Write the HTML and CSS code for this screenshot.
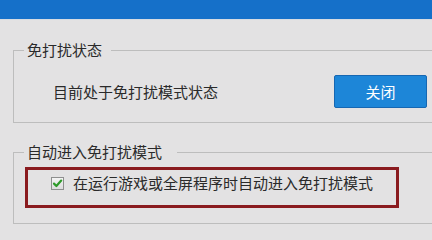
FILE: index.html
```html
<!DOCTYPE html>
<html lang="zh-CN">
<head>
<meta charset="utf-8">
<link rel="stylesheet" href="styles.css">
</head>
<body>
<div class="titlebar"></div>
<main class="content">
  <fieldset class="group group-status">
    <legend class="group-title">免打扰状态</legend>
    <div class="status-row">
      <span class="status-text">目前处于免打扰模式状态</span>
      <button class="btn-primary" type="button">关闭</button>
    </div>
  </fieldset>
  <fieldset class="group group-auto">
    <legend class="group-title">自动进入免打扰模式</legend>
    <div class="highlight">
      <label class="check-row">
        <span class="checkbox">
          <svg width="11" height="11" viewBox="0 0 11 11"><path d="M2 5.6 L4.4 8 L9.2 2.6" fill="none" stroke="#2e9a2a" stroke-width="2.2" stroke-linecap="round" stroke-linejoin="round"/></svg>
        </span>
        <span class="check-label">在运行游戏或全屏程序时自动进入免打扰模式</span>
      </label>
    </div>
  </fieldset>
</main>
</body>
</html>
```
FILE: styles.css
```css
html, body {
  margin: 0;
  padding: 0;
}
body {
  width: 432px;
  height: 236px;
  overflow: hidden;
  background: #e3e2e3;
  font-family: "Noto Sans CJK SC", "Noto Sans", sans-serif;
  font-size: 15px;
  color: #2a2a2a;
}
.titlebar {
  height: 19px;
  background: #1570c9;
  border-bottom: 1px solid #d6dbe2;
}
.content {
  padding-left: 13px;
}
.group {
  margin: 0;
  padding: 0;
  border: 1px solid #bdbdbd;
  border-right: 0;
  min-width: 0;
}
.group-title {
  padding: 0 9px 0 3px;
  margin-left: 10px;
  line-height: 20px;
  height: 20px;
}
.group-status {
  margin-top: 20px;
  padding-bottom: 14px;
}
.status-row {
  display: flex;
  align-items: center;
  justify-content: space-between;
  margin-top: 15px;
  padding-left: 39px;
  padding-right: 5px;
}
.status-text {
  line-height: 20px;
}
.btn-primary {
  width: 93px;
  height: 33px;
  background: #1d86d8;
  border: 1px solid #1667b2;
  border-radius: 2px;
  color: #ffffff;
  font-family: inherit;
  font-size: 15px;
  padding: 0;
}
.group-auto {
  margin-top: 19px;
  padding-bottom: 15px;
}
.group-auto .group-title {
  padding-right: 15px;
}
.highlight {
  margin: 5px 0 0 11px;
  width: 374px;
  height: 41px;
  box-sizing: border-box;
  border: 3px solid #8a1b1f;
  padding: 3px 0 0 23px;
}
.check-row {
  display: flex;
  align-items: center;
  height: 20px;
}
.checkbox {
  width: 11px;
  height: 11px;
  border: 1px solid #8e8f8f;
  background: linear-gradient(#f4f4f4, #dcdcdc);
  display: flex;
  align-items: center;
  justify-content: center;
  margin-right: 9px;
}
.check-label {
  line-height: 20px;
}
```
